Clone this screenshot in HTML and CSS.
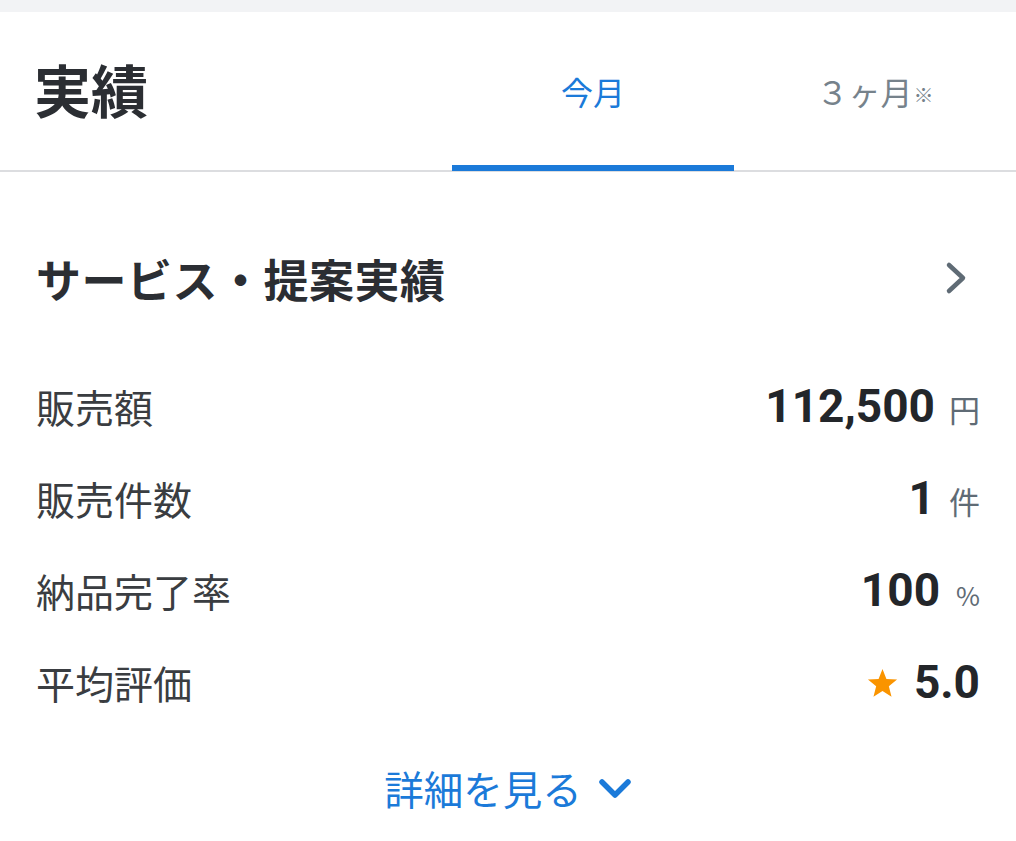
FILE: index.html
```html
<!DOCTYPE html>
<html lang="ja">
<head>
<meta charset="utf-8">
<title>実績</title>
<link rel="stylesheet" href="styles.css">
</head>
<body>
<div class="topbar"></div>
<header class="header">
  <h1 class="title">実績</h1>
  <nav class="tabs">
    <div class="tab active">今月</div>
    <div class="tab">３ヶ月<span class="note">※</span></div>
  </nav>
</header>
<main class="content">
  <div class="section-head">
    <h2 class="section-title">サービス・提案実績</h2>
    <svg class="chev-right" width="24" height="34" viewBox="0 0 24 34"><path d="M5 4 L19 17 L5 30" fill="none" stroke="#5f6b75" stroke-width="4.5" stroke-linecap="round" stroke-linejoin="round"/></svg>
  </div>
  <div class="rows">
    <div class="row"><span class="label">販売額</span><span class="value"><b class="num">112,500</b><span class="unit">円</span></span></div>
    <div class="row"><span class="label">販売件数</span><span class="value"><b class="num">1</b><span class="unit">件</span></span></div>
    <div class="row"><span class="label">納品完了率</span><span class="value"><b class="num">100</b><span class="unit pct">%</span></span></div>
    <div class="row"><span class="label">平均評価</span><span class="value"><svg class="star" width="33" height="31" viewBox="0 0 24 23"><path d="M12 0.8 L14.9 8.1 L22.8 8.6 L16.7 13.6 L18.7 21.3 L12 17 L5.3 21.3 L7.3 13.6 L1.2 8.6 L9.1 8.1 Z" fill="#fa9400"/></svg><b class="num">5.0</b></span></div>
  </div>
  <div class="more">
    <span class="more-text">詳細を見る</span>
    <svg class="chev-down" width="34" height="22" viewBox="0 0 34 22"><path d="M4 4 L17 17 L30 4" fill="none" stroke="#1b7ad9" stroke-width="5.5" stroke-linecap="round" stroke-linejoin="round"/></svg>
  </div>
</main>
</body>
</html>
```

FILE: styles.css
```css
* { box-sizing: border-box; margin: 0; padding: 0; }
html, body { background: #ffffff; }
body {
  font-family: Roboto, "Noto Sans CJK JP", sans-serif;
  color: #2b2e33;
  width: 1016px;
  overflow: hidden;
}
.topbar {
  height: 12px;
  background: #f2f3f5;
}
.header {
  display: flex;
  align-items: stretch;
  height: 160px;
  border-bottom: 2px solid #dcdde0;
}
.title {
  flex: 1;
  display: flex;
  align-items: center;
  padding-left: 34px;
  padding-bottom: 6px;
  font-family: "Noto Sans CJK JP", sans-serif;
  font-size: 57px;
  font-weight: 700;
  color: #2b2e33;
  line-height: 1;
}
.tabs {
  display: flex;
  width: 564px;
}
.tab {
  width: 282px;
  display: flex;
  align-items: center;
  justify-content: center;
  padding-top: 4px;
  font-family: "Noto Sans CJK JP", sans-serif;
  font-size: 32px;
  color: #76828b;
  border-bottom: 6px solid transparent;
  margin-bottom: -1px;
}
.tab.active {
  color: #1b7ad9;
  border-bottom-color: #1b7ad9;
}
.note { font-size: 20px; margin-left: 1px; position: relative; top: 4px; }
.content {
  padding: 60px 36px 0 36px;
}
.section-head {
  height: 92px;
  display: flex;
  align-items: center;
  justify-content: space-between;
}
.section-title {
  font-family: "Noto Sans CJK JP", sans-serif;
  font-size: 45px;
  font-weight: 700;
  color: #2b2e33;
  letter-spacing: 0.5px;
}
.chev-right { margin-right: 12px; }
.rows {
  margin-top: 36px;
}
.row {
  height: 92px;
  display: flex;
  align-items: center;
  justify-content: space-between;
}
.label {
  font-family: "Noto Sans CJK JP", sans-serif;
  font-size: 39px;
  color: #3a3d41;
}
.value {
  display: flex;
  align-items: baseline;
}
.num {
  font-family: Roboto, sans-serif;
  font-size: 46px;
  font-weight: 700;
  color: #23262a;
}
.unit {
  font-family: "Noto Sans CJK JP", sans-serif;
  font-size: 31px;
  color: #5f6b75;
  margin-left: 14px;
}
.unit.pct { font-size: 26px; margin-left: 16px; }
.star { align-self: center; margin-right: 15px; margin-top: 2px; }
.more {
  margin-top: 19px;
  height: 80px;
  display: flex;
  align-items: center;
  justify-content: center;
  gap: 16px;
}
.more-text {
  font-family: "Noto Sans CJK JP", sans-serif;
  font-size: 39.5px;
  color: #1b7ad9;
}
.chev-down { margin-top: 4px; }
```
